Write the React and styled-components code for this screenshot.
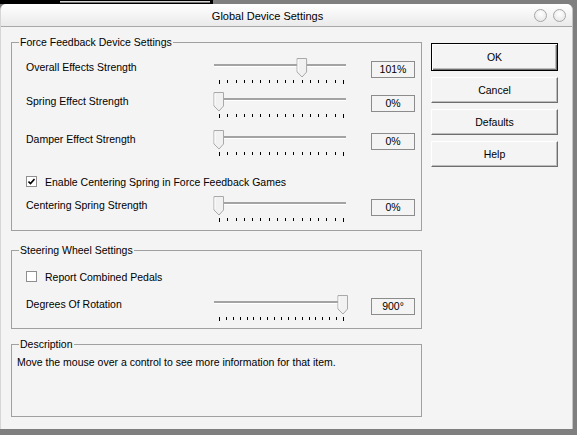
import React from 'react'
import styled, { createGlobalStyle, css } from 'styled-components'

const GlobalStyle = createGlobalStyle`
  html, body {
    margin: 0;
    padding: 0;
    background: #7f7f7f;
    font-family: "Liberation Sans", Arial, sans-serif;
    font-size: 10.5px;
    color: #000;
  }
`

const Page = styled.div`
  width: 577px;
  height: 435px;
  overflow: hidden;
  background: #7f7f7f;
`

const TopStrip = styled.div`
  height: 4px;
  display: flex;
`

const BlackBar = styled.div`
  width: 213px;
  height: 4px;
  background: #000;
  padding-left: 60px;
  box-sizing: border-box;
  padding-top: 1px;
`

const StripLine = styled.div`
  width: 150px;
  height: 1px;
  background: #d8d8d8;
  border-bottom: 1px solid #777;
`

const Window = styled.div`
  width: 573px;
  height: 425px;
  background: #f4f4f4;
  border-radius: 6px 6px 0 0;
  overflow: hidden;
  box-sizing: border-box;
  border-left: 1px solid #d6d6d6;
  border-right: 1px solid #c4c4c4;
`

const TitleBar = styled.div`
  height: 22px;
  display: flex;
  align-items: center;
  background: linear-gradient(#ffffff, #eaeaea);
  border-bottom: 1px solid #a8a8a8;
  padding-right: 6px;
`

const Title = styled.div`
  flex: 1;
  text-align: center;
  font-size: 11px;
  padding-top: 1px;
`

const Circles = styled.div`
  display: flex;
  gap: 6px;
`

const Circle = styled.div`
  width: 11px;
  height: 11px;
  border-radius: 50%;
  border: 1px solid #a6a6a6;
  background: radial-gradient(circle at 50% 35%, #ffffff, #e2e2e2);
`

const Body = styled.div`
  display: flex;
  padding: 15px 0 0 10px;
`

const LeftCol = styled.div`
  width: 411px;
  display: flex;
  flex-direction: column;
`

const RightCol = styled.div`
  margin-left: 9px;
  padding-top: 1px;
  display: flex;
  flex-direction: column;
  gap: 6px;
`

const Group = styled.div`
  position: relative;
  border: 1px solid #a0a0a0;
  box-sizing: border-box;
  padding: ${p => p.$pad};
  margin-top: ${p => p.$top || 0}px;
  height: ${p => p.$height}px;
`

const Legend = styled.span`
  position: absolute;
  top: -7px;
  left: 7px;
  padding: 0 1px;
  line-height: 13px;
  background: #f4f4f4;
`

const SliderRow = styled.div`
  display: grid;
  grid-template-columns: 188px 157px 44px;
  height: 27px;
  margin-top: ${p => p.$top || 0}px;
`

const Label = styled.div`
  line-height: 13px;
  padding-top: 3px;
`

const ValueBox = styled.div`
  margin-top: 3px;
  height: 17px;
  box-sizing: border-box;
  border: 1px solid #8c8c8c;
  text-align: center;
  line-height: 15px;
`

const CheckRow = styled.label`
  display: flex;
  align-items: center;
  gap: 8px;
  height: 13px;
  margin-top: ${p => p.$top || 0}px;
`

const Box = styled.span`
  width: 11px;
  height: 11px;
  box-sizing: border-box;
  border: 1px solid #8e8e8e;
  background: #fff;
  display: flex;
  align-items: center;
  justify-content: center;
`

const Description = styled.div`
  line-height: 13px;
`

const Button = styled.button`
  width: 127px;
  height: 26px;
  padding: 0;
  background: #f4f4f4;
  font-family: "Liberation Sans", Arial, sans-serif;
  font-size: 10.5px;
  color: #000;
  border: 1px solid;
  border-color: #ffffff #6e6e6e #6e6e6e #ffffff;
  box-shadow: inset -1px -1px 0 #bdbdbd;
  ${p => p.$primary && css`
    height: 28px;
    border: 1px solid #000;
    box-shadow: inset 1px 1px 0 #fff, inset -1px -1px 0 #6e6e6e, inset -2px -2px 0 #bdbdbd;
  `}
`

const Slider = ({ value, ticks }) => {
  const x0 = 5
  const x1 = 129
  const cx = x0 + value * (x1 - x0)
  const marks = []
  for (let i = 0; i < ticks; i++) {
    const x = Math.round(x0 + (i * (x1 - x0)) / (ticks - 1)) + 0.5
    const end = i === 0 || i === ticks - 1
    marks.push(<line key={i} x1={x} x2={x} y1={22} y2={end ? 26 : 25} stroke="#000" />)
  }
  return (
    <svg width="134" height="27" style={{ overflow: 'visible' }}>
      <rect x="0" y="6" width="132" height="2" fill="#a3a3a3" />
      <rect x="0" y="8" width="132" height="1" fill="#ffffff" />
      {marks}
      <polygon
        points={`${cx - 5},0.5 ${cx + 4.5},0.5 ${cx + 4.5},14 ${cx},19 ${cx - 5},14`}
        fill="#f1f1f1"
        stroke="#a9a9a9"
      />
      <line x1={cx - 4} x2={cx - 4} y1={1.5} y2={13.5} stroke="#fff" />
    </svg>
  )
}

const Row = ({ label, value, text, ticks = 16, top }) => (
  <SliderRow $top={top}>
    <Label>{label}</Label>
    <Slider value={value} ticks={ticks} />
    <ValueBox>{text}</ValueBox>
  </SliderRow>
)

const Check = ({ checked, children, top }) => (
  <CheckRow $top={top}>
    <Box>
      {checked && (
        <svg width="7" height="7" viewBox="0 0 7 7">
          <path d="M0.5 3.5 L2.5 5.5 L6.5 1" stroke="#000" strokeWidth="1.6" fill="none" />
        </svg>
      )}
    </Box>
    {children}
  </CheckRow>
)

const App = () => {
  return (
    <Page>
      <GlobalStyle />
      <TopStrip>
        <BlackBar>
          <StripLine />
        </BlackBar>
      </TopStrip>
      <Window>
        <TitleBar>
          <Title>Global Device Settings</Title>
          <Circles>
            <Circle />
            <Circle />
          </Circles>
        </TitleBar>
        <Body>
          <LeftCol>
            <Group $pad="15px 0 0 14px" $height={189}>
              <Legend>Force Feedback Device Settings</Legend>
              <Row label="Overall Effects Strength" value={0.67} text="101%" />
              <Row label="Spring Effect Strength" value={0} text="0%" top={7} />
              <Row label="Damper Effect Strength" value={0} text="0%" top={11} />
              <Check checked top={18}>Enable Centering Spring in Force Feedback Games</Check>
              <Row label="Centering Spring Strength" value={0} text="0%" top={8} />
            </Group>
            <Group $pad="19px 0 0 14px" $height={79} $top={19}>
              <Legend>Steering Wheel Settings</Legend>
              <Check>Report Combined Pedals</Check>
              <Row label="Degrees Of Rotation" value={1} text="900°" ticks={19} top={12} />
            </Group>
            <Group $pad="11px 0 0 5px" $height={73} $top={15}>
              <Legend>Description</Legend>
              <Description>Move the mouse over a control to see more information for that item.</Description>
            </Group>
          </LeftCol>
          <RightCol>
            <Button $primary>OK</Button>
            <Button>Cancel</Button>
            <Button>Defaults</Button>
            <Button>Help</Button>
          </RightCol>
        </Body>
      </Window>
    </Page>
  )
}

export default App
